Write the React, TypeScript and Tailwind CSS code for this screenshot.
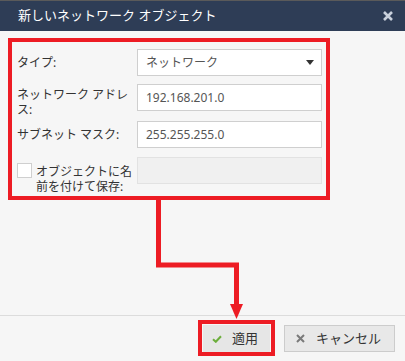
import { ReactNode } from 'react';

const RED = '#ed1c24';

const Row = ({ h, children }: { h: string; children: ReactNode }) => (
  <div className={`flex items-start ${h}`}>{children}</div>
);

const TextBox = ({ value }: { value: string }) => (
  <div className="w-[185px] h-[27px] bg-white border border-[#cfcfcf] flex items-center pl-[8px] text-[12px] text-[#555]">
    {value}
  </div>
);

const CloseIcon = () => (
  <svg width="10" height="10" viewBox="0 0 10 10">
    <path d="M1 1 L9 9 M9 1 L1 9" stroke="#c9d1dc" strokeWidth="2.6" />
  </svg>
);

const CheckIcon = () => (
  <svg width="10" height="8" viewBox="0 0 10 8">
    <path d="M1 4.2 L3.8 6.8 L9 1.2" fill="none" stroke="#6cae3c" strokeWidth="2" />
  </svg>
);

const CrossIcon = () => (
  <svg width="9" height="9" viewBox="0 0 9 9">
    <path d="M1 1 L8 8 M8 1 L1 8" stroke="#7a7a7a" strokeWidth="2" />
  </svg>
);

export default function App() {
  return (
    <div className="relative w-[405px] h-[361px] overflow-hidden bg-[#f6f6f6] flex flex-col font-['Noto_Sans','Noto_Sans_CJK_JP',sans-serif] text-[#333]">
      {/* title bar */}
      <div className="border-t border-[#5a5a5a] h-[31px] bg-[#2e3d56] flex items-center justify-between pl-[18px] pr-[12px]">
        <span className="text-[13px] text-white">新しいネットワーク オブジェクト</span>
        <CloseIcon />
      </div>

      {/* form */}
      <div className="pt-[7px] pl-[8px]">
        <div className="w-[322px] border-4 border-[#ed1c24] pt-[7px] pl-[5px] pr-[4px] pb-[2px] text-[12px] leading-[15px]">
          <Row h="h-[35px]">
            <div className="w-[120px] h-[27px] flex items-center">タイプ:</div>
            <div className="w-[185px] h-[27px] bg-white border border-[#cfcfcf] flex items-center justify-between pl-[8px] pr-[7px] text-[#555]">
              <span>ネットワーク</span>
              <span className="w-0 h-0 border-l-[4px] border-r-[4px] border-t-[5px] border-l-transparent border-r-transparent border-t-[#333]" />
            </div>
          </Row>
          <Row h="h-[37px]">
            <div className="w-[120px] pt-[3px] pr-[6px]">ネットワーク アドレス:</div>
            <TextBox value="192.168.201.0" />
          </Row>
          <Row h="h-[36px]">
            <div className="w-[120px] h-[27px] flex items-center">サブネット マスク:</div>
            <TextBox value="255.255.255.0" />
          </Row>
          <Row h="h-[37px]">
            <div className="w-[120px] flex items-start">
              <span className="mt-[6px] w-[15px] h-[15px] shrink-0 bg-white border border-[#cfcfcf]" />
              <span className="ml-[4px] w-[100px] pt-[7px]">オブジェクトに名前を付けて保存:</span>
            </div>
            <div className="w-[185px] h-[27px] bg-[#f0f0f0] border border-[#e2e2e2]" />
          </Row>
        </div>
      </div>

      <div className="flex-1" />

      {/* footer */}
      <div className="h-[46px] border-t border-[#dcdcdc] flex items-start justify-end pt-[4px] pr-[10px] gap-[9px]">
        <div className="border-4 border-[#ed1c24] pt-[1px] px-[1px]">
          <button className="w-[67px] h-[27px] bg-[#e6e6e6] flex items-center pl-[9px] gap-[10px] text-[13px] text-[#333]">
            <CheckIcon />
            <span>適用</span>
          </button>
        </div>
        <button className="mt-[5px] w-[111px] h-[27px] bg-[#e8e8e8] border border-[#cccccc] flex items-center pl-[11px] gap-[11px] text-[13px] text-[#333]">
          <CrossIcon />
          <span>キャンセル</span>
        </button>
      </div>

      {/* annotation connector */}
      <svg className="absolute inset-0 pointer-events-none" width="405" height="361" viewBox="0 0 405 361">
        <polyline
          points="158.5,199 158.5,265 236.5,265 236.5,306"
          fill="none"
          stroke={RED}
          strokeWidth="5"
          strokeLinejoin="miter"
        />
        <polygon points="230,304 243,304 236.5,319" fill={RED} />
      </svg>
    </div>
  );
}
